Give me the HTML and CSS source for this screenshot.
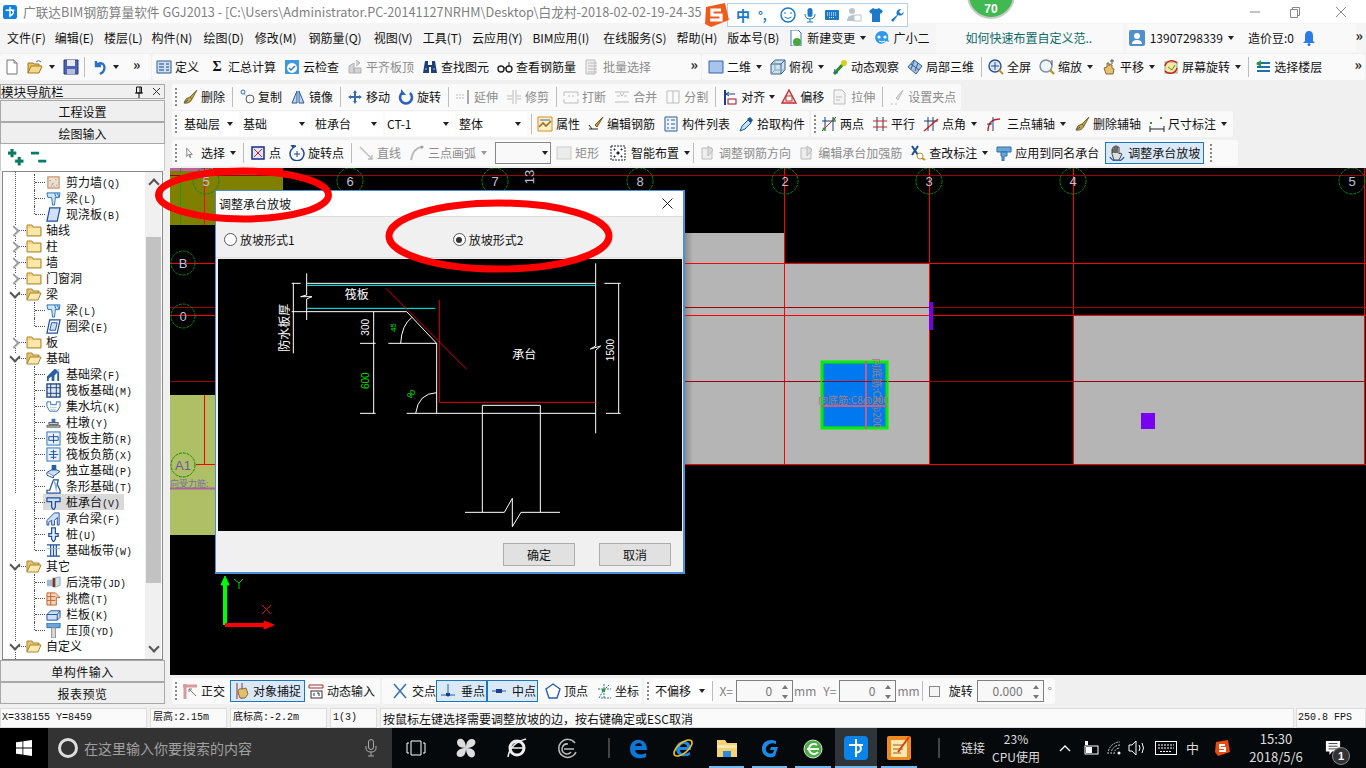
FILE: index.html
```html
<!DOCTYPE html>
<html lang="zh-CN">
<head>
<meta charset="utf-8">
<title>广联达BIM钢筋算量软件 GGJ2013</title>
<link rel="stylesheet" href="styles.css">
</head>
<body>
<svg class="sprite" width="0" height="0">
<defs>
<symbol id="doc" viewBox="0 0 16 16"><path d="M3 1h7l3 3v11H3z" fill="#fff" stroke="#777"/><path d="M10 1v3h3" fill="#ddd" stroke="#777"/></symbol>
<symbol id="open" viewBox="0 0 16 16"><path d="M1 14V4h5l1 1h5v2" fill="#e8c468" stroke="#a07820"/><path d="M1 14l3-7h11l-3 7z" fill="#f5d98a" stroke="#a07820"/><path d="M9 3q3-3 5 0" fill="none" stroke="#3a6db0"/></symbol>
<symbol id="save" viewBox="0 0 16 16"><path d="M1 1h14v14H1z" fill="#4c62b5" stroke="#2a3a80"/><path d="M4 1h8v6H4z" fill="#e8e8f0"/><path d="M4 10h8v5H4z" fill="#b8c0d8"/></symbol>
<symbol id="undo" viewBox="0 0 16 16"><path d="M4 2v5h5M4 7q3-4 7-2 3 3 0 8l-3 2" fill="none" stroke="#2b6fc4" stroke-width="2.4"/></symbol>
<symbol id="def" viewBox="0 0 16 16"><path d="M1 2h14v12H1z" fill="#cfe0f4" stroke="#2a5a9a"/><path d="M3 5h5M3 8h5M3 11h5M10 5h3M10 8h3M10 11h3" stroke="#1c3f78"/></symbol>
<symbol id="cloud" viewBox="0 0 16 16"><path d="M1 1h14v14H1z" fill="#3c9ae0" rx="2"/><circle cx="8" cy="9" r="5" fill="#fff"/><path d="M5 9l2 2 4-4" fill="none" stroke="#2a7fc8" stroke-width="1.5"/></symbol>
<symbol id="flat" viewBox="0 0 16 16"><path d="M2 14V7l5-3v10zM7 14h7v-5H7zM9 1l4 3-4 3" fill="#d4d4d4" stroke="#b0b0b0"/></symbol>
<symbol id="binoc" viewBox="0 0 16 16"><path d="M3 2h3v4h4V2h3l2 12H9V8H7v6H1z" fill="#1f3f7a"/><path d="M3 10h2M11 10h2" stroke="#9cc" /></symbol>
<symbol id="glass" viewBox="0 0 16 16"><circle cx="4" cy="10" r="3" fill="none" stroke="#222" stroke-width="1.4"/><circle cx="12" cy="10" r="3" fill="none" stroke="#222" stroke-width="1.4"/><path d="M7 9h2M12 7V3" stroke="#222"/></symbol>
<symbol id="batch" viewBox="0 0 16 16"><path d="M2 1h9v14H2z" fill="#eee" stroke="#bbb"/><path d="M4 4h9M4 7h9M4 10h9M4 13h9" stroke="#bbb"/></symbol>
<symbol id="r2d" viewBox="0 0 16 16"><path d="M1 2h14v12H1z" fill="#a9c4ec" stroke="#3560a8"/></symbol>
<symbol id="cube" viewBox="0 0 16 16"><path d="M1 5l4-4h10v10l-4 4H1z" fill="#cfe0f0" stroke="#35608c"/><path d="M1 5h10v10M11 5l4-4" fill="none" stroke="#35608c"/><path d="M5 1v10L1 15M5 11h10" fill="none" stroke="#8aa"/></symbol>
<symbol id="orbit" viewBox="0 0 16 16"><path d="M2 15L12 4" stroke="#2c8a2c" stroke-width="3"/><circle cx="12" cy="4" r="3" fill="#d8d020"/><path d="M3 10q-2 4 3 4" fill="none" stroke="#1a5ea8"/></symbol>
<symbol id="c3d" viewBox="0 0 16 16"><path d="M1 8l6-7 8 6-6 8z" fill="#a8c4e4" stroke="#355f90"/><path d="M4 5l8 6M7 2l-3 8M11 4l-3 8" stroke="#355f90"/></symbol>
<symbol id="zall" viewBox="0 0 16 16"><circle cx="7" cy="7" r="6" fill="#dbe8f8" stroke="#2a4f90" stroke-width="1.4"/><path d="M7 3v8M3 7h8" stroke="#2a4f90"/><path d="M11 11l4 4" stroke="#c09020" stroke-width="2"/></symbol>
<symbol id="zoom" viewBox="0 0 16 16"><circle cx="7" cy="7" r="6" fill="#eef4fb" stroke="#7a8a9a" stroke-width="1.4"/><path d="M11 11l4 4" stroke="#c09020" stroke-width="2.4"/><path d="M13 1v5" stroke="#555"/></symbol>
<symbol id="pan" viewBox="0 0 16 16"><path d="M3 9l3-1V4h2v3l1-2 2 1v3l2 1-1 5H5z" fill="#e4c070" stroke="#8a6a30"/><path d="M11 0v5M9 2h4" stroke="#456"/></symbol>
<symbol id="scr" viewBox="0 0 16 16"><rect x="2" y="3" width="12" height="11" fill="#f5e9a0" stroke="#8aa"/><path d="M2 7a7 7 0 0 1 12-3M14 9a7 7 0 0 1-12 3" fill="none" stroke="#d02020" stroke-width="1.5"/><path d="M5 8l4 3 3-5" stroke="#3a9a3a" fill="none"/></symbol>
<symbol id="floor" viewBox="0 0 16 16"><path d="M2 4h13M2 8h13M2 12h13" stroke="#1f6fa8" stroke-width="2"/><path d="M6 1L1 5l5 3" fill="#2e9a3a"/></symbol>
<symbol id="del" viewBox="0 0 16 16"><path d="M15 1L8 8l2 2zM2 14q1-5 6-6l2 2q-2 5-8 4z" fill="#c0a040" stroke="#7a6a30"/><path d="M2 14l4-3" stroke="#2a5fa0"/></symbol>
<symbol id="copy" viewBox="0 0 16 16"><circle cx="4" cy="3" r="2" fill="none" stroke="#2a6fb0"/><circle cx="11" cy="10" r="4" fill="none" stroke="#555"/><path d="M5 5l4 3" stroke="#999" stroke-dasharray="2 1"/></symbol>
<symbol id="mirror" viewBox="0 0 16 16"><path d="M7 2L2 14h5zM9 2l5 12H9z" fill="#bcd4ee" stroke="#2a5a9a"/></symbol>
<symbol id="move" viewBox="0 0 16 16"><path d="M8 1l2 3H9v3h3V6l3 2-3 2V9H9v3h1l-2 3-2-3h1V9H4v1L1 8l3-2v1h3V4H6z" fill="#3a6aa8"/></symbol>
<symbol id="rot" viewBox="0 0 16 16"><path d="M4 4a6 6 0 1 0 8 0" fill="none" stroke="#2a60c0" stroke-width="2.6"/><path d="M3 0v6h5z" fill="#2a60c0"/></symbol>
<symbol id="ext" viewBox="0 0 16 16"><path d="M1 6h9M1 9h9" stroke="#bbb" stroke-dasharray="2 1"/><path d="M13 1v14" stroke="#aaa" stroke-width="2"/></symbol>
<symbol id="trim" viewBox="0 0 16 16"><path d="M7 1v14M10 1v14M1 7h5M11 7h4M1 10h5M11 10h4" stroke="#bbb"/></symbol>
<symbol id="brk" viewBox="0 0 16 16"><path d="M1 7V3h14v4M1 10v4h14v-4M5 7h2M9 7h2" fill="none" stroke="#bbb"/></symbol>
<symbol id="mrg" viewBox="0 0 16 16"><path d="M1 3h14M1 13h14M3 7h3M10 7h3M6 4l2 3 2-3" fill="none" stroke="#bbb"/></symbol>
<symbol id="spl" viewBox="0 0 16 16"><path d="M2 2h12v12H2zM8 2v12" fill="none" stroke="#bbb"/></symbol>
<symbol id="align" viewBox="0 0 16 16"><path d="M3 1v15" stroke="#1a3e90" stroke-width="2"/><path d="M4 5h9M4 5l3-2M4 5l3 2" stroke="#1a3e90" fill="none"/><rect x="6" y="10" width="8" height="5" fill="#fff" stroke="#a01020"/></symbol>
<symbol id="offs" viewBox="0 0 16 16"><path d="M8 1l7 13H1z" fill="#fbe0dc" stroke="#c03030" stroke-width="1.4"/><rect x="5" y="7" width="6" height="5" fill="#fff" stroke="#c03030"/></symbol>
<symbol id="strt" viewBox="0 0 16 16"><path d="M2 1h8l3 3v11H2z" fill="#f4f4f4" stroke="#bbb"/><path d="M4 8h6M4 11h4" stroke="#bbb"/></symbol>
<symbol id="grp" viewBox="0 0 16 16"><path d="M14 1L7 9l2 2zM2 15h2M6 15h2" stroke="#bbb" fill="#ddd"/></symbol>
<symbol id="attr" viewBox="0 0 16 16"><path d="M1 1h14v14H1z" fill="#fff1c8" stroke="#e08a20"/><path d="M2 11l4-4 3 3 5-5" fill="none" stroke="#a06a20" stroke-width="1.6"/><path d="M3 4h10" stroke="#2a6fb0"/></symbol>
<symbol id="edrb" viewBox="0 0 16 16"><path d="M15 1L7 9l2 2z" fill="#c9a030" stroke="#7a5020"/><path d="M1 13h9M1 9l3 4" stroke="#222" fill="none"/></symbol>
<symbol id="list" viewBox="0 0 16 16"><path d="M2 1h12v14H2z" fill="#eef4fb" stroke="#2a5a9a"/><path d="M4 4h2M4 8h2M4 12h2M8 4h4M8 8h4M8 12h4" stroke="#2a5a9a"/></symbol>
<symbol id="pick" viewBox="0 0 16 16"><path d="M2 15l2-5 6-6 3 3-6 6z" fill="#bfe0f4" stroke="#1c5a9a"/><path d="M9 3l4 4 2-3-3-3z" fill="#1c5a9a"/></symbol>
<symbol id="two" viewBox="0 0 16 16"><path d="M4 1v14M12 1v14M1 5h14" stroke="#1a3e78"/><path d="M1 15L15 1" stroke="#d02020"/><circle cx="3" cy="13" r="1.5" fill="#2a9a2a"/><circle cx="13" cy="3" r="1.5" fill="#2a9a2a"/></symbol>
<symbol id="par" viewBox="0 0 16 16"><path d="M5 1v14M11 1v14" stroke="#1a3e78"/><path d="M1 5h14M1 11h14" stroke="#d02020"/></symbol>
<symbol id="ang" viewBox="0 0 16 16"><path d="M5 1v14M10 1v14M1 5h14" stroke="#1a3e78"/><path d="M1 15L15 3" stroke="#d02020" stroke-width="1.4"/></symbol>
<symbol id="arc3" viewBox="0 0 16 16"><path d="M2 15Q2 3 14 3" fill="none" stroke="#d02020" stroke-width="1.4"/><path d="M7 1v14M1 8h5" stroke="#1a3e78"/></symbol>
<symbol id="dim" viewBox="0 0 16 16"><path d="M1 13h14M1 10v6M15 10v6" stroke="#222"/><rect x="1" y="6" width="2" height="2" fill="#2a9a2a"/><rect x="11" y="1" width="2" height="2" fill="#2a9a2a"/></symbol>
<symbol id="cur" viewBox="0 0 16 16"><path d="M4 1v12l3-3 2 5 1-1-2-4h4z" fill="#fff" stroke="#555"/></symbol>
<symbol id="pnt" viewBox="0 0 16 16"><rect x="2" y="2" width="12" height="12" fill="#dfe6f8" stroke="#1a2a90" stroke-width="1.5"/><path d="M4 4l8 8M12 4l-8 8" stroke="#d02020"/></symbol>
<symbol id="rtp" viewBox="0 0 16 16"><path d="M4 3a7 7 0 1 0 8 0" fill="none" stroke="#1a4a90" stroke-width="1.5"/><path d="M2 0l2 3 3-2zM8 6v6M5 9h6" fill="#1a4a90" stroke="#1a4a90"/></symbol>
<symbol id="ln" viewBox="0 0 16 16"><path d="M2 2l12 12M10 14h4v-4" fill="none" stroke="#bbb" stroke-width="1.3"/></symbol>
<symbol id="arc" viewBox="0 0 16 16"><path d="M2 15Q4 3 13 2" fill="none" stroke="#bbb" stroke-width="2"/><circle cx="13" cy="2" r="1.5" fill="#999"/></symbol>
<symbol id="rg" viewBox="0 0 16 16"><rect x="1" y="2" width="14" height="12" fill="#ececec" stroke="#ccc"/></symbol>
<symbol id="smart" viewBox="0 0 16 16"><path d="M1 1h14v14H1z" fill="#fff" stroke="#222" stroke-dasharray="2 1"/><path d="M4 4h1v1H4zM11 4h1v1h-1zM4 11h1v1H4zM11 11h1v1h-1zM7 7h2v2H7z" stroke="#234"/></symbol>
<symbol id="adj" viewBox="0 0 16 16"><path d="M2 3h10v11H2z" fill="#eee" stroke="#bbb"/><path d="M8 1l5 4-5 6z" fill="#ddd" stroke="#bbb"/></symbol>
<symbol id="chk" viewBox="0 0 16 16"><path d="M2 1l4 6 2 3M8 1L2 10" stroke="#1a4a90" stroke-width="2" fill="none"/><circle cx="10" cy="11" r="3" fill="#fff" stroke="#c09020"/><path d="M12 13l3 2" stroke="#c09020" stroke-width="2"/></symbol>
<symbol id="apl" viewBox="0 0 16 16"><path d="M1 2h14v5H1z" fill="#6aa6dc" stroke="#2a6ea8"/><path d="M5 7h6v4H8v5H6v-5H5z" fill="#6aa6dc" stroke="#2a6ea8"/></symbol>
<symbol id="hand" viewBox="0 0 16 16"><path d="M3 9V4h1v4-6h2v6-7h2v7-6h2v7l1-1 2 1-3 6H5z" fill="#ddd" stroke="#444"/><path d="M1 12q2 4 7 4t7-4" fill="none" stroke="#1a5ea8" stroke-width="1.4"/></symbol>
<symbol id="ort" viewBox="0 0 16 16"><path d="M3 1v15M1 3h14" stroke="#d99a9a" stroke-width="3"/><path d="M7 6l7 7M7 6v3M7 6h3" stroke="#777" fill="none"/></symbol>
<symbol id="snp" viewBox="0 0 16 16"><path d="M3 0v16M8 0v16" stroke="#8a3030"/><path d="M4 9q0-4 4-3l4-1 2 6-3 4H6z" fill="#e0c070" stroke="#8a6a30"/></symbol>
<symbol id="dyn" viewBox="0 0 16 16"><path d="M1 2h14M1 5h14M1 2v3M15 2v3" stroke="#a03030" fill="none"/><rect x="3" y="8" width="11" height="7" fill="#fff" stroke="#333"/><path d="M6 10v3M9 10h2v3" stroke="#333" fill="none"/></symbol>
<symbol id="crs" viewBox="0 0 16 16"><path d="M2 1l12 14M14 1L2 15" stroke="#2a6fb0" stroke-width="1.4"/></symbol>
<symbol id="perp" viewBox="0 0 16 16"><path d="M8 1v13M1 12h14" stroke="#1a5ea8"/><rect x="6" y="10" width="4" height="3" fill="#1a3e90"/></symbol>
<symbol id="midp" viewBox="0 0 16 16"><path d="M1 8h14" stroke="#1a5ea8"/><rect x="5" y="6" width="6" height="4" fill="#1a3e90"/></symbol>
<symbol id="vert" viewBox="0 0 16 16"><path d="M8 1l7 5-3 9H4L1 6z" fill="#fff" stroke="#2a5fb0" stroke-width="1.4"/></symbol>
<symbol id="crd" viewBox="0 0 16 16"><path d="M3 15L7 8 13 2M5 15h10M8 1v14M2 6h13" stroke="#2a6fb0" stroke-dasharray="2 1" fill="none"/><rect x="6" y="6" width="3" height="3" fill="#2a9a2a"/></symbol>
<symbol id="nwc" viewBox="0 0 16 16"><path d="M3 0h7l3 3v13H3z" fill="#fff" stroke="#3a7ab8"/><circle cx="9" cy="12" r="4" fill="#4aa83a"/></symbol>
<symbol id="gxe" viewBox="0 0 16 16"><path d="M8 1c5 0 7 4 6 8l1 3-3-1c-2 3-6 4-9 1C-1 8 2 1 8 1z" fill="#2e9be8"/><circle cx="5" cy="7" r="1.6" fill="#fff"/><circle cx="11" cy="7" r="1.6" fill="#fff"/><path d="M5 11q3 2 6 0" stroke="#fff" fill="none"/></symbol>
<symbol id="usr" viewBox="0 0 16 16"><rect width="16" height="16" rx="2" fill="#4f8fd0"/><circle cx="8" cy="6" r="3" fill="#fff"/><path d="M3 14q0-4 5-4t5 4z" fill="#fff"/></symbol>
<symbol id="bell" viewBox="0 0 16 16"><path d="M8 1q4 0 4 5v5l2 2H2l2-2V6q0-5 4-5z" fill="#2a7ae8"/><circle cx="8" cy="14.5" r="1.5" fill="#2a7ae8"/></symbol>
<symbol id="plus" viewBox="0 0 20 20"><path d="M3 0h3v3h3v3H6v3H3V6H0V3h3zM11 9h3v3h3v3h-3v3h-3v-3H8v-3h3z" fill="#0b7a6c" stroke="#083" stroke-width=".4"/></symbol>
<symbol id="minus" viewBox="0 0 20 20"><path d="M0 3h9v3H0zM8 12h9v3H8z" fill="#0b7a6c"/></symbol>
<symbol id="fold" viewBox="0 0 16 16"><path d="M1 14V3h5l1 2h8v9z" fill="#f6d274" stroke="#a8853a"/><path d="M2 6h12v7H2z" fill="#fbe7a8"/></symbol>
<symbol id="foldo" viewBox="0 0 16 16"><path d="M1 14V3h5l1 2h6v2" fill="#e8c468" stroke="#a8853a"/><path d="M1 14l3-7h11l-3 7z" fill="#fde9ac" stroke="#a8853a"/></symbol>
<symbol id="t-wall" viewBox="0 0 16 16"><rect x="2" y="2" width="12" height="12" fill="#eadfd2" stroke="#c07a3a"/><path d="M4 6h1M7 9h1M10 5h1M5 12h1M11 11h1M8 12h1M6 10h1" stroke="#777"/></symbol>
<symbol id="t-beam" viewBox="0 0 16 16"><path d="M1 2h14l-1 5H10l-1 8H7L6 7H2z" fill="#cfe4f6" stroke="#2a70b8"/><path d="M9 2l2 5M12 2l2 5" stroke="#2a70b8"/></symbol>
<symbol id="t-slab" viewBox="0 0 16 16"><path d="M4 1h11l-3 14H1z" fill="#cfe0f8" stroke="#1c4fa0" stroke-width="1.3"/></symbol>
<symbol id="t-ring" viewBox="0 0 16 16"><path d="M4 1h11l-3 14H1z" fill="#fff" stroke="#1c4fa0" stroke-width="1.3"/><path d="M6 4h6l-2 8H4z" fill="#cfe0f8" stroke="#1c4fa0"/></symbol>
<symbol id="t-fb" viewBox="0 0 16 16"><path d="M1 15V10l8-8h5v13h-2V6l-3 3v6H6v-5l-3 2v3z" fill="#2a5fa0"/><path d="M10 2l4 0v4" fill="#bcd4ee"/></symbol>
<symbol id="t-raft" viewBox="0 0 16 16"><rect x="1" y="1" width="14" height="14" fill="#dbe8f8" stroke="#1c4078" stroke-width="1.4"/><path d="M5 1v14M11 1v14M1 5h14M1 11h14" stroke="#1c4078"/></symbol>
<symbol id="t-pit" viewBox="0 0 16 16"><path d="M1 3h4v3h6V3h4v5l-3 5H4L1 8z" fill="#fff" stroke="#2a70b8"/><path d="M4 9h8M5 11h6" stroke="#6aa" stroke-dasharray="1 1"/></symbol>
<symbol id="t-dun" viewBox="0 0 16 16"><path d="M6 4h4v4H6z" fill="#3a6fb0"/><path d="M3 8h10v2H3z" fill="#cfe0f0" stroke="#555"/><path d="M1 11h14v2H1z" fill="#bbb" stroke="#666"/></symbol>
<symbol id="t-rm" viewBox="0 0 16 16"><rect x="1" y="1" width="14" height="14" fill="#e8f0fb" stroke="#2a70b8"/><path d="M8 3v10M3 6h10v4H3z" fill="none" stroke="#1c4fa0"/></symbol>
<symbol id="t-rn" viewBox="0 0 16 16"><rect x="1" y="1" width="14" height="14" fill="#e8f0fb" stroke="#2a70b8"/><path d="M3 8h10M5 5h6M5 11h6M8 3v10" stroke="#1c4fa0"/></symbol>
<symbol id="t-iso" viewBox="0 0 16 16"><path d="M1 10l7-4 7 3-7 5z" fill="#cfe0f4" stroke="#1c4fa0"/><path d="M6 2h5v6H6z" fill="#2a5fa0"/><path d="M1 10v3l7 3v-2" fill="#fff" stroke="#1c4fa0"/></symbol>
<symbol id="t-strp" viewBox="0 0 16 16"><path d="M1 15v-3h3l2-6 2-5h5l-1 5 3 6v3z" fill="#fff" stroke="#1c4fa0" stroke-width="1.3"/><path d="M8 1l4 5-1 9" fill="#8ab0dc"/></symbol>
<symbol id="t-cap" viewBox="0 0 16 16"><path d="M1 3h14v4H10v6l-2 3-2-3V7H1z" fill="#cfe0f4" stroke="#1c4fa0" stroke-width="1.3"/></symbol>
<symbol id="t-cb" viewBox="0 0 16 16"><path d="M1 15V10l8-8h5v13H12V7L9 10v5H6v-5l-3 2v3z" fill="#cfe0f4" stroke="#1c4fa0"/></symbol>
<symbol id="t-pile" viewBox="0 0 16 16"><path d="M6 1h4v6h3v3h-3v3l-2 3-2-3v-3H3V7h3z" fill="#e8f0fb" stroke="#1c4fa0" stroke-width="1.3"/></symbol>
<symbol id="t-band" viewBox="0 0 16 16"><path d="M1 2h14M1 14h14M5 2v12M8 2v12M11 2v12" stroke="#1c4fa0" stroke-width="1.3"/><path d="M1 6h14" stroke="#8ab0dc"/></symbol>
<symbol id="t-post" viewBox="0 0 16 16"><path d="M1 5h6v7H1z" fill="#a0b8d0"/><path d="M7 3h3v10H7z" fill="#7a3010"/><path d="M10 3l5-1v9l-5 2z" fill="#cfe0f4" stroke="#8aa"/></symbol>
<symbol id="t-eav" viewBox="0 0 16 16"><path d="M1 2h9l5 5h-4v8H1z" fill="#f4d4bc" stroke="#c0602a"/><path d="M1 6h9M1 10h9M5 2v13" stroke="#c0602a"/></symbol>
<symbol id="t-rail" viewBox="0 0 16 16"><path d="M1 8l4-4h10v7l-3 3H1z" fill="#cfe0f4" stroke="#1c4fa0"/><path d="M1 8h11v6M12 8l3-4" fill="none" stroke="#1c4fa0"/></symbol>
<symbol id="t-cop" viewBox="0 0 16 16"><path d="M1 0h14v5H1z" fill="#6aa6dc" stroke="#2a6ea8"/><path d="M6 5h4v11H6z" fill="#dcdcdc" stroke="#888"/></symbol>
</defs>
</svg>

<header class="titlebar">
  <svg class="appicon" viewBox="0 0 16 16"><rect width="16" height="16" rx="3" fill="#1282e0"/><path d="M8 2v12M3 6h4a3 3 0 1 1 0 5M13 6H9" fill="none" stroke="#fff" stroke-width="1.6"/></svg>
  <span class="titletext">广联达BIM钢筋算量软件 GGJ2013 - [C:\Users\Administrator.PC-20141127NRHM\Desktop\白龙村-2018-02-02-19-24-35</span>
  <div class="winctl">
    <svg class="wc" viewBox="0 0 12 12"><path d="M1 6h10" stroke="#888"/></svg>
    <svg class="wc" viewBox="0 0 12 12"><path d="M1.5 3.5h7v8h-7zM3.5 3.5v-2h7v8h-2" fill="none" stroke="#888"/></svg>
    <svg class="wc" viewBox="0 0 12 12"><path d="M1 1l10 10M11 1L1 11" stroke="#888"/></svg>
  </div>
</header>

<nav class="menubar">
  <span class="m mn">文件(F)</span><span class="m">编辑(E)</span><span class="m mn">楼层(L)</span><span class="m mw">构件(N)</span><span class="m mw">绘图(D)</span><span class="m mx">修改(M)</span><span class="m mx">钢筋量(Q)</span><span class="m">视图(V)</span><span class="m">工具(T)</span><span class="m">云应用(Y)</span><span class="m mz">BIM应用(I)</span><span class="m">在线服务(S)</span><span class="m">帮助(H)</span><span class="m mn">版本号(B)</span>
  <span class="t"><svg class="i"><use href="#nwc"/></svg>新建变更</span><i class="ar"></i>
  <span class="t"><svg class="i"><use href="#gxe"/></svg>广小二</span>
  <span class="newsbox">如何快速布置自定义范..</span>
  <div class="userbox">
    <span class="t"><svg class="i"><use href="#usr"/></svg>13907298339</span><i class="ar"></i>
    <span class="m bean">造价豆:0</span>
    <svg class="i"><use href="#bell"/></svg>
  </div>
  <span class="more push">»</span>
</nav>

<div class="tb1">
  <div class="grp g-a">
    <svg class="i"><use href="#doc"/></svg>
    <svg class="i op"><use href="#open"/></svg><i class="ar ar1"></i>
    <svg class="i"><use href="#save"/></svg><i class="sep s5"></i>
    <svg class="i"><use href="#undo"/></svg><i class="ar ar2"></i>
    <span class="more">»</span>
  </div>
  <div class="grp g-b">
    <span class="t"><svg class="i"><use href="#def"/></svg>定义</span>
    <span class="t sig"><b class="sigma">Σ</b>汇总计算</span>
    <span class="t"><svg class="i"><use href="#cloud"/></svg>云检查</span>
    <span class="t off"><svg class="i"><use href="#flat"/></svg>平齐板顶</span>
    <span class="t"><svg class="i"><use href="#binoc"/></svg>查找图元</span>
    <span class="t"><svg class="i"><use href="#glass"/></svg>查看钢筋量</span>
    <span class="t off"><svg class="i"><use href="#batch"/></svg>批量选择</span>
    <span class="more push">»</span>
  </div>
  <div class="grp g-c">
    <span class="t sel2d"><svg class="i"><use href="#r2d"/></svg>二维</span><i class="ar"></i>
    <span class="t"><svg class="i"><use href="#cube"/></svg>俯视</span><i class="ar"></i>
    <span class="t"><svg class="i"><use href="#orbit"/></svg>动态观察</span>
    <span class="t"><svg class="i"><use href="#c3d"/></svg>局部三维</span><i class="sep"></i>
    <span class="t"><svg class="i"><use href="#zall"/></svg>全屏</span>
    <span class="t"><svg class="i"><use href="#zoom"/></svg>缩放</span><i class="ar"></i>
    <span class="t"><svg class="i"><use href="#pan"/></svg>平移</span><i class="ar"></i>
    <span class="t"><svg class="i"><use href="#scr"/></svg>屏幕旋转</span><i class="ar"></i><i class="sep"></i>
    <span class="t"><svg class="i"><use href="#floor"/></svg>选择楼层</span>
    <span class="more push">»</span>
  </div>
</div>

<div class="work">
  <aside class="side">
    <div class="navh"><span>模块导航栏</span>
      <svg class="pin" viewBox="0 0 10 12"><path d="M2.500 1h5v6h-5zM1 7h8M5 7v5M6 1v6" fill="none" stroke="#111"/></svg>
      <svg class="navx" viewBox="0 0 9 9"><path d="M1 1l7 7M8 1L1 8" stroke="#333"/></svg>
    </div>
    <div class="sbtn">工程设置</div>
    <div class="sbtn">绘图输入</div>
    <div class="sico"><svg class="pm"><use href="#plus"/></svg><svg class="pm"><use href="#minus"/></svg></div>
    <div class="treebox">
      <div class="tree">
        <div class="r l"><svg class="ti"><use href="#t-wall"/></svg><span>剪力墙<em>(Q)</em></span></div>
        <div class="r l"><svg class="ti"><use href="#t-beam"/></svg><span>梁<em>(L)</em></span></div>
        <div class="r l end"><svg class="ti"><use href="#t-slab"/></svg><span>现浇板<em>(B)</em></span></div>
        <div class="r f"><i class="cr"></i><svg class="fi"><use href="#fold"/></svg><span>轴线</span></div>
        <div class="r f"><i class="cr"></i><svg class="fi"><use href="#fold"/></svg><span>柱</span></div>
        <div class="r f"><i class="cr"></i><svg class="fi"><use href="#fold"/></svg><span>墙</span></div>
        <div class="r f"><i class="cr"></i><svg class="fi"><use href="#fold"/></svg><span>门窗洞</span></div>
        <div class="r f"><i class="cr dn"></i><svg class="fi"><use href="#foldo"/></svg><span>梁</span></div>
        <div class="r l"><svg class="ti"><use href="#t-beam"/></svg><span>梁<em>(L)</em></span></div>
        <div class="r l end"><svg class="ti"><use href="#t-ring"/></svg><span>圈梁<em>(E)</em></span></div>
        <div class="r f"><i class="cr"></i><svg class="fi"><use href="#fold"/></svg><span>板</span></div>
        <div class="r f"><i class="cr dn"></i><svg class="fi"><use href="#foldo"/></svg><span>基础</span></div>
        <div class="r l"><svg class="ti"><use href="#t-fb"/></svg><span>基础梁<em>(F)</em></span></div>
        <div class="r l"><svg class="ti"><use href="#t-raft"/></svg><span>筏板基础<em>(M)</em></span></div>
        <div class="r l"><svg class="ti"><use href="#t-pit"/></svg><span>集水坑<em>(K)</em></span></div>
        <div class="r l"><svg class="ti"><use href="#t-dun"/></svg><span>柱墩<em>(Y)</em></span></div>
        <div class="r l"><svg class="ti"><use href="#t-rm"/></svg><span>筏板主筋<em>(R)</em></span></div>
        <div class="r l"><svg class="ti"><use href="#t-rn"/></svg><span>筏板负筋<em>(X)</em></span></div>
        <div class="r l"><svg class="ti"><use href="#t-iso"/></svg><span>独立基础<em>(P)</em></span></div>
        <div class="r l"><svg class="ti"><use href="#t-strp"/></svg><span>条形基础<em>(T)</em></span></div>
        <div class="r l cur"><svg class="ti"><use href="#t-cap"/></svg><span>桩承台<em>(V)</em></span></div>
        <div class="r l"><svg class="ti"><use href="#t-cb"/></svg><span>承台梁<em>(F)</em></span></div>
        <div class="r l"><svg class="ti"><use href="#t-pile"/></svg><span>桩<em>(U)</em></span></div>
        <div class="r l end"><svg class="ti"><use href="#t-band"/></svg><span>基础板带<em>(W)</em></span></div>
        <div class="r f"><i class="cr dn"></i><svg class="fi"><use href="#foldo"/></svg><span>其它</span></div>
        <div class="r l"><svg class="ti"><use href="#t-post"/></svg><span>后浇带<em>(JD)</em></span></div>
        <div class="r l"><svg class="ti"><use href="#t-eav"/></svg><span>挑檐<em>(T)</em></span></div>
        <div class="r l"><svg class="ti"><use href="#t-rail"/></svg><span>栏板<em>(K)</em></span></div>
        <div class="r l end"><svg class="ti"><use href="#t-cop"/></svg><span>压顶<em>(YD)</em></span></div>
        <div class="r f"><i class="cr dn"></i><svg class="fi"><use href="#foldo"/></svg><span>自定义</span></div>
      </div>
      <div class="vs"><i class="vup"></i><div class="vthumb"></div><i class="vdn"></i></div>
    </div>
    <div class="sbtn s2">单构件输入</div>
    <div class="sbtn s2">报表预览</div>
  </aside>

  <main class="right">
    <div class="tbr r2">
      <div class="grp g-d">
        <i class="grip"></i>
        <span class="t"><svg class="i"><use href="#del"/></svg>删除</span><i class="sep"></i>
        <span class="t"><svg class="i"><use href="#copy"/></svg>复制</span>
        <span class="t"><svg class="i"><use href="#mirror"/></svg>镜像</span><i class="sep"></i>
        <span class="t"><svg class="i"><use href="#move"/></svg>移动</span>
        <span class="t"><svg class="i"><use href="#rot"/></svg>旋转</span><i class="sep"></i>
        <span class="t off"><svg class="i"><use href="#ext"/></svg>延伸</span>
        <span class="t off"><svg class="i"><use href="#trim"/></svg>修剪</span><i class="sep"></i>
        <span class="t off"><svg class="i"><use href="#brk"/></svg>打断</span>
        <span class="t off"><svg class="i"><use href="#mrg"/></svg>合并</span>
        <span class="t off"><svg class="i"><use href="#spl"/></svg>分割</span><i class="sep"></i>
        <span class="t tight"><svg class="i"><use href="#align"/></svg>对齐</span><i class="ar a2"></i>
        <span class="t"><svg class="i"><use href="#offs"/></svg>偏移</span>
        <span class="t off"><svg class="i"><use href="#strt"/></svg>拉伸</span><i class="sep"></i>
        <span class="t off"><svg class="i"><use href="#grp"/></svg>设置夹点</span>
      </div>
    </div>
    <div class="tbr r3">
      <div class="grp g-e">
        <i class="grip"></i>
        <span class="cb w57">基础层<i class="ar"></i></span>
        <span class="cb w70">基础<i class="ar"></i></span>
        <span class="cb w70">桩承台<i class="ar"></i></span>
        <span class="cb w70">CT-1<i class="ar"></i></span>
        <span class="cb w70">整体<i class="ar"></i></span>
        <i class="sep s4"></i>
        <span class="t"><svg class="i"><use href="#attr"/></svg>属性</span>
        <span class="t"><svg class="i"><use href="#edrb"/></svg>编辑钢筋</span>
        <span class="t"><svg class="i"><use href="#list"/></svg>构件列表</span>
        <span class="t"><svg class="i"><use href="#pick"/></svg>拾取构件</span>
      </div>
      <div class="grp g-f">
        <i class="grip"></i>
        <span class="t"><svg class="i"><use href="#two"/></svg>两点</span>
        <span class="t"><svg class="i"><use href="#par"/></svg>平行</span>
        <span class="t"><svg class="i"><use href="#ang"/></svg>点角</span><i class="ar"></i>
        <span class="t ga"><svg class="i"><use href="#arc3"/></svg>三点辅轴</span><i class="ar"></i>
        <span class="t"><svg class="i"><use href="#del"/></svg>删除辅轴</span>
        <span class="t"><svg class="i"><use href="#dim"/></svg>尺寸标注</span><i class="ar"></i>
      </div>
    </div>
    <div class="tbr r4">
      <div class="grp g-g">
        <i class="grip"></i>
        <span class="t wide"><svg class="i"><use href="#cur"/></svg>选择</span><i class="ar"></i><i class="sep"></i>
        <span class="t"><svg class="i"><use href="#pnt"/></svg>点</span>
        <span class="t"><svg class="i"><use href="#rtp"/></svg>旋转点</span><i class="sep"></i>
        <span class="t off"><svg class="i"><use href="#ln"/></svg>直线</span>
        <span class="t off"><svg class="i"><use href="#arc"/></svg>三点画弧</span><i class="ar off"></i>
        <span class="combo"><i class="ar"></i></span>
        <span class="t off"><svg class="i"><use href="#rg"/></svg>矩形</span>
        <span class="t sm"><svg class="i"><use href="#smart"/></svg>智能布置</span><i class="ar a4"></i><i class="sep"></i>
        <span class="t off"><svg class="i"><use href="#adj"/></svg>调整钢筋方向</span>
        <span class="t off"><svg class="i"><use href="#adj"/></svg>编辑承台加强筋</span>
        <span class="t"><svg class="i"><use href="#chk"/></svg>查改标注</span><i class="ar"></i>
        <span class="t"><svg class="i"><use href="#apl"/></svg>应用到同名承台</span>
        <span class="t act"><svg class="i"><use href="#hand"/></svg>调整承台放坡</span>
        <i class="grip g2"></i>
      </div>
    </div>

    <svg class="canvas" viewBox="170 168 1196 507" width="1196" height="507">
      <defs><linearGradient id="sh" x1="0" x2="1" y1="0" y2="0"><stop offset="0" stop-color="#8c8c8c"/><stop offset="1" stop-color="#b5b5b5"/></linearGradient></defs>
      <rect x="170" y="168" width="1196" height="507" fill="#000"/>
      <rect x="170" y="168" width="113" height="57" fill="#808000"/>
      <rect x="213" y="168" width="70" height="2" fill="#f00"/>
      <rect x="170" y="168" width="43" height="3" fill="#c060a0"/>
      <rect x="170" y="395" width="46" height="140" fill="#aebf66"/>
      <rect x="685" y="233" width="100" height="31" fill="#b5b5b5"/>
      <rect x="685" y="264" width="244" height="200" fill="#b5b5b5"/>
      <rect x="685" y="233" width="8" height="231" fill="url(#sh)"/>
      <rect x="1074" y="316" width="290" height="148" fill="#b5b5b5"/>
      <g class="crisp" stroke="#f00" fill="none">
        <path d="M784.500 168V464M929.500 168V464M1073.500 168V464M1364.500 168V464M204.500 168V225"/>
        <path d="M170 263.500H215M685 263.500H1366M685 315.500H1366M170 315.500H215M685 464.500H1366M204.500 395V464M196 464.500H215"/>
      </g>
      <g class="crisp" stroke="#a00000" fill="none">
        <path d="M170 175.500H1366M170 307.500H1366M170 381.500H1366"/>
      </g>
      <path class="crisp" d="M180.500 225V168" stroke="#1a9a1a" fill="none"/>
      <g fill="none" stroke="#0a8a0a" stroke-dasharray="3 1">
        <circle cx="206" cy="181" r="13"/><circle cx="350" cy="181" r="13"/><circle cx="495" cy="181" r="13"/><circle cx="640" cy="181" r="13"/><circle cx="785" cy="181" r="13"/><circle cx="929" cy="181" r="13"/><circle cx="1073" cy="181" r="13"/><circle cx="1352" cy="181" r="13"/><circle cx="183" cy="263" r="12"/><circle cx="183" cy="316" r="12"/><circle cx="183" cy="465" r="12"/>
      </g>
      <g class="axn">
        <text x="206" y="186">5</text><text x="350" y="186">6</text><text x="495" y="186">7</text><text x="640" y="186">8</text><text x="785" y="186">2</text><text x="929" y="186">3</text><text x="1073" y="186">4</text><text x="1352" y="186">5</text><text x="183" y="268">B</text><text x="183" y="321">0</text>
        <text x="183" y="470" class="ax1">A1</text>
        <text x="0" y="0" transform="translate(534 177) rotate(-90)">13</text>
      </g>
      <path d="M170 488.500H215" stroke="#b060a0" stroke-width="2"/>
      <text x="170" y="487" class="lab">向受力筋:</text>
      <rect x="929" y="302" width="4" height="28" fill="#7a00e0"/>
      <rect x="1141" y="413" width="14" height="16" fill="#7a00f0"/>
      <rect x="822" y="362" width="65" height="66" fill="#0078f0" stroke="#00f000" stroke-width="3"/>
      <path class="crisp" d="M821 406H887M865.500 361V429" stroke="#c0608c" stroke-width="2"/>
      <path class="crisp" d="M822 381.500H887" stroke="#a00000"/>
      <text x="818" y="404" class="lab2">向底筋:C8@200</text>
      <text transform="translate(873 358) rotate(90)" class="lab2">向底筋:C8@200</text>
      <path d="M225 625V584" stroke="#00ff00" stroke-width="4"/>
      <path d="M225 576l-4 9h8z" fill="#00ff00" stroke="#00ff00"/>
      <path d="M225 625H264" stroke="#f00" stroke-width="4"/>
      <path d="M274 625l-10-4v8z" fill="#f00" stroke="#f00"/>
      <path d="M234 579l5 4 4-4M239 583v6" stroke="#00d000" fill="none"/>
      <path d="M262 605l9 9M271 605l-9 9" stroke="#e00000" fill="none"/>
    </svg>

    <div class="tbr rb">
      <div class="grp g-h">
        <i class="grip"></i>
        <span class="t"><svg class="i"><use href="#ort"/></svg>正交</span>
        <span class="t act"><svg class="i"><use href="#snp"/></svg>对象捕捉</span>
        <span class="t"><svg class="i"><use href="#dyn"/></svg>动态输入</span>
      </div>
      <div class="grp g-i">
        <span class="t cross"><svg class="i"><use href="#crs"/></svg>交点</span>
        <span class="t act a3"><svg class="i"><use href="#perp"/></svg>垂点</span>
        <span class="t act a3"><svg class="i"><use href="#midp"/></svg>中点</span>
        <span class="t"><svg class="i"><use href="#vert"/></svg>顶点</span>
        <span class="t"><svg class="i"><use href="#crd"/></svg>坐标</span>
      </div>
      <div class="grp g-j">
        <i class="grip"></i>
        <span class="offset">不偏移<i class="ar"></i></span><i class="sep"></i>
        <span class="gl">X=</span><span class="spin">0<i class="sp"></i></span><span class="gl">mm</span>
        <span class="gl y">Y=</span><span class="spin">0<i class="sp"></i></span><span class="gl">mm</span><i class="sep"></i>
        <i class="chkb"></i><span class="rotl">旋转</span><span class="spin s3">0.000<i class="sp"></i></span><span class="gl deg">°</span>
      </div>
    </div>
  </main>
</div>

<footer class="status">
  <span class="c c1">X=338155 Y=8459</span>
  <span class="c c2">层高:2.15m</span>
  <span class="c c3">底标高:-2.2m</span>
  <span class="c c4">1(3)</span>
  <span class="c c5">按鼠标左键选择需要调整放坡的边，按右键确定或ESC取消</span>
  <span class="c c6">250.8 FPS</span>
</footer>

<div class="taskbar">
  <div class="start"><svg class="win" viewBox="0 0 16 16"><path d="M0 2.300l6.500-.9v6.200H0zM7.300 1.300L16 0v7.600H7.300zM0 8.400h6.500v6.200L0 13.700zM7.300 8.400H16V16l-8.700-1.200z" fill="#fff"/></svg></div>
  <div class="search"><i class="cortana"></i><span class="stext">在这里输入你要搜索的内容</span>
    <svg class="mic" viewBox="0 0 12 18"><rect x="3.500" y=".5" width="5" height="10" rx="2.500" fill="none" stroke="#aaa"/><path d="M1 7v2q0 4 5 4t5-4V7M6 13v4M3 17h6" fill="none" stroke="#aaa"/></svg>
  </div>
  <div class="tasks">
    <span class="ts w48"><svg class="tv" viewBox="0 0 20 16"><path d="M5 1h10v14H5zM3 3H1v10h2M17 3h2v10h-2" fill="none" stroke="#fff"/></svg></span>
    <span class="ts w52"><svg class="ti2" viewBox="0 0 22 22"><path d="M11 11C4 11 2 8 2 5s3-4 5-3 4 4 4 9zM11 11c0-7 3-9 6-9s4 3 3 5-4 4-9 4zM11 11c7 0 9 3 9 6s-3 4-5 3-4-4-4-9zM11 11c0 7-3 9-6 9s-4-3-3-5 4-4 9-4z" fill="#ddd"/></svg></span>
    <span class="ts w50"><svg class="ti2" viewBox="0 0 22 22"><circle cx="11" cy="11" r="7" fill="none" stroke="#eee" stroke-width="3"/><path d="M5 11h12M2 20q2-14 18-18" fill="none" stroke="#eee" stroke-width="1.600"/></svg></span>
    <span class="ts w52"><svg class="ti2" viewBox="0 0 22 22"><path d="M18 6a9 9 0 1 0 1 9M7 12h10M11 7a5 5 0 1 0 3 8" fill="none" stroke="#bbb" stroke-width="1.500"/></svg></span>
    <i class="tsep"></i>
    <span class="ts w46"><svg class="ti2" viewBox="0 0 22 22"><path d="M3 12c0-7 6-10 10-9 5 1 7 5 7 10H8c0 4 6 6 11 3v4c-7 3-16 1-16-8zM8 9h7c0-4-6-4-7 0z" fill="#0a78d8"/></svg></span>
    <span class="ts w44"><svg class="ti2" viewBox="0 0 22 22"><path d="M4 12c0-6 5-8 8-8 5 0 7 4 7 9H8c0 4 5 5 10 2v3c-6 3-14 1-14-6zM8 10h7c0-4-6-4-7 0z" fill="#1a8ae8"/><ellipse cx="11" cy="11" rx="11" ry="5" transform="rotate(-40 11 11)" fill="none" stroke="#f0c020" stroke-width="1.600"/></svg></span>
    <span class="ts w43 run"><svg class="ti2" viewBox="0 0 22 22"><path d="M1 3h8l2 3h10v14H1z" fill="#f6d274"/><path d="M1 8h20v3H1z" fill="#fbe7a8"/><path d="M7 14h8v6H7z" fill="#2a8ae0"/></svg></span>
    <span class="ts w43 run"><svg class="ti2" viewBox="0 0 22 22"><path d="M17 4C9 1 2 6 3 13s9 9 13 6l3-9h-7l-1 3h4l-1 3c-5 2-8-2-7-5s5-6 10-4z" fill="#1a8ae8"/></svg></span>
    <span class="ts w44 run"><svg class="ti2" viewBox="0 0 22 22"><circle cx="11" cy="12" r="9" fill="#48b040" stroke="#ddd"/><path d="M5 12h12M15 8a5 5 0 1 0 1 7" fill="none" stroke="#fff" stroke-width="2"/></svg></span>
    <span class="ts w42 cur-app run"><svg class="ti2 big" viewBox="0 0 24 24"><rect width="24" height="24" rx="4" fill="#0a84e8"/><path d="M12 3v18M5 9h6a4 4 0 1 1 0 7M19 9h-6" fill="none" stroke="#fff" stroke-width="2"/></svg></span>
    <span class="ts w44 run"><svg class="ti2 big" viewBox="0 0 24 24"><rect width="24" height="24" rx="2" fill="#f08a20"/><rect x="4" y="4" width="16" height="17" fill="#f8e8b0"/><path d="M6 9h10M6 13h10M6 17h8" stroke="#a06020"/><path d="M22 1L11 16" stroke="#d04010" stroke-width="2"/></svg></span>
    <i class="tsep s2"></i>
    <span class="tl link">链接</span>
    <span class="tl cpu"><span>23%</span><span>CPU使用</span></span>
    <svg class="tray up" viewBox="0 0 14 14"><path d="M2 10l5-5 5 5" fill="none" stroke="#fff" stroke-width="1.300"/></svg>
    <svg class="tray" viewBox="0 0 18 16"><rect x="4" y="6" width="13" height="8" fill="none" stroke="#fff"/><rect x="5" y="7" width="6" height="6" fill="#fff"/><path d="M4 1h3v4H4z" fill="#fff"/></svg>
    <svg class="tray wf" viewBox="0 0 18 16"><path d="M2 14A12 12 0 0 1 14 2M5 14a9 9 0 0 1 9-9M8 14a6 6 0 0 1 6-6" fill="none" stroke="#ccc" stroke-dasharray="2 1"/><circle cx="13" cy="13" r="1.500" fill="#fff"/></svg>
    <svg class="tray vl" viewBox="0 0 18 16"><path d="M1 5h3l4-4v14l-4-4H1z" fill="none" stroke="#fff"/><path d="M11 5q2 3 0 6M14 3q3 5 0 10" fill="none" stroke="#fff"/></svg>
    <svg class="tray kb" viewBox="0 0 22 14"><rect x=".5" y=".5" width="21" height="13" fill="none" stroke="#fff"/><path d="M3 4h16M3 7h16M5 10.500h12" stroke="#fff" stroke-dasharray="2 1"/></svg>
    <span class="tl zh">中</span>
    <svg class="tray s" viewBox="0 0 16 16"><path d="M2 2l12-2 2 12-12 4-3-4z" fill="#e84a10"/><path d="M11 5H6v3h5v3H5" fill="none" stroke="#fff" stroke-width="2"/></svg>
    <span class="tl clock"><span>15:30</span><span>2018/5/6</span></span>
    <span class="notif"><svg class="nt" viewBox="0 0 18 18"><path d="M1 1h16v12H8l-3 4v-4H1z" fill="#fff"/><path d="M4 4h10M4 7h10M4 10h10" stroke="#333"/></svg><b class="nb">1</b></span>
  </div>
</div>

<div class="dialog">
  <div class="dtitle"><span>调整承台放坡</span><svg class="dx" viewBox="0 0 11 11"><path d="M.5.500l10 10M10.500.500l-10 10" stroke="#222"/></svg></div>
  <div class="drad">
    <span class="rd"><i class="rc"></i>放坡形式1</span>
    <span class="rd r2nd"><i class="rc on"></i>放坡形式2</span>
  </div>
  <svg class="dpane" viewBox="24 222 1392 816" width="464" height="272">
    <rect x="24" y="222" width="1392" height="816" fill="#000"/>
    <g fill="none" stroke="#fff" stroke-width="3">
      <path d="M290 295H1157M1157 235V483L1141 492L1172 483L1157 496V745"/>
      <path d="M290 265V330L272 335L306 335L290 342V405M250 295V505M245 295H272M245 380H590L680 475V685M535 475H680M590 685H1157"/>
      <path d="M491 380V685M450 475H497M450 685H497"/>
      <path d="M572 475Q575 420 605 398M617 685Q625 625 680 623"/>
      <path d="M817 982V661H991V982M765 982H883L907 940V1025L933 982H1050"/>
      <path d="M1183 295H1232M1226 295V685M1188 685H1232"/>
    </g>
    <path d="M290 301H1157M290 370H675" fill="none" stroke="#00ffff" stroke-width="3"/>
    <path d="M528 310L770 553M688 345V652H1157" fill="none" stroke="#f00" stroke-width="2.600"/>
    <g class="dt">
      <text x="440" y="343">筏板</text>
      <text x="943" y="523">承台</text>
      <text transform="translate(236 428) rotate(-90)">防水板厚</text>
      <text class="nm" transform="translate(476 427) rotate(-90)">300</text>
      <text class="nm" transform="translate(1211 495) rotate(-90)">1500</text>
      <text class="nm gr" transform="translate(476 587) rotate(-90)">600</text>
      <text class="nm gr sm2" transform="translate(558 428) rotate(-90)">45</text>
      <text class="nm gr sm2" transform="translate(610 632) rotate(-50)">90</text>
    </g>
  </svg>
  <div class="dfoot"><span class="dbtn">确定</span><span class="dbtn">取消</span></div>
</div>

<svg class="marks" viewBox="0 0 1366 768" width="1366" height="768">
  <ellipse cx="243.500" cy="195" rx="85" ry="24" fill="none" stroke="#f00" stroke-width="7"/>
  <ellipse cx="499" cy="236" rx="110" ry="33" fill="none" stroke="#f00" stroke-width="7"/>
</svg>

<div class="ime">
  <svg class="imes" viewBox="0 0 26 24"><path d="M3 4l19-4 4 17-18 7-6-3z" fill="#f05a1a"/><path d="M18 7H9v5h9v5H7" fill="none" stroke="#fff" stroke-width="3.200"/></svg>
  <div class="imebar">
    <b>中</b><b class="pn">°,</b>
    <svg viewBox="0 0 16 16"><circle cx="8" cy="8" r="7" fill="#fff" stroke="#1a7ac8" stroke-width="1.500"/><path d="M5 5v2M11 5v2M4.500 10q3.500 3 7 0" stroke="#1a7ac8" fill="none"/></svg>
    <svg viewBox="0 0 16 16"><rect x="5.500" y="1" width="5" height="9" rx="2.500" fill="#1a7ac8"/><path d="M3 7q0 5 5 5t5-5M8 12v3M5 15h6" stroke="#1a7ac8" fill="none"/></svg>
    <svg viewBox="0 0 16 16"><rect x="1" y="3" width="14" height="10" rx="1" fill="#1a7ac8"/><path d="M3 6h10M3 8h10M5 10.500h6" stroke="#fff" stroke-dasharray="1 1"/></svg>
    <svg viewBox="0 0 16 16"><circle cx="6" cy="4" r="3" fill="#b8c4cc"/><path d="M1 14q0-6 6-6h2v6z" fill="#b8c4cc"/><rect x="8" y="8" width="7" height="6" fill="#fff" stroke="#b8c4cc"/></svg>
    <svg viewBox="0 0 16 16"><path d="M5 1L1 4l2 3 1-1v9h8V6l1 1 2-3-4-3q-3 2-6 0z" fill="#1a7ac8"/></svg>
    <svg viewBox="0 0 16 16"><path d="M14 5a4 4 0 0 1-6 3l-5 7-2-2 6-5a4 4 0 0 1 4-6l-2 3 2 2z" fill="#1a7ac8"/></svg>
  </div>
</div>
<div class="score"><span>70</span></div>
</body>
</html>
```
FILE: styles.css
```css
*{box-sizing:border-box}
html,body{margin:0;padding:0}
body{position:relative;width:1366px;height:768px;overflow:hidden;background:#f0f0f0;color:#111;font:12px/16px "Noto Sans CJK SC","Liberation Sans",sans-serif;display:flex;flex-direction:column}
.sprite{position:absolute}
i,em,b{font-style:normal}
svg{display:block;flex:none}
.i{width:16px;height:16px}

.titlebar{height:23px;background:#fff;display:flex;align-items:center;flex:none;position:relative}
.appicon{width:14px;height:16px;margin-left:3px}
.titletext{margin-left:6px;color:#7f7f7f;font-size:12.700px;white-space:nowrap;flex:none}
.winctl{margin-left:auto;display:flex;gap:28px;padding-right:19px}
.winctl .wc{width:12px;height:12px}
.winctl .wc:nth-child(2){margin-right:6px}

.menubar{height:30px;display:flex;align-items:center;flex:none;padding-left:7px;background:#f5f5f5;white-space:nowrap}
.m{margin-right:10px}
.mn{margin-right:9px}.mw{margin-right:11px}.mx{margin-right:12px}.mz{margin-right:14px}
.t{display:inline-flex;align-items:center;gap:3px;margin-right:8px;white-space:nowrap;flex:none}
.off{color:#8c8c8c}
.more{font-size:14px;font-weight:700;line-height:12px;margin-top:-7px;color:#222}
.push{margin-left:auto;margin-right:3px}
.newsbox{width:187px;height:28px;margin-left:-1px;background:#f9f9f9;color:#0e6b68;line-height:28px;padding-left:29px;border-radius:2px}
.userbox{width:230px;height:28px;margin-left:4px;background:#f9f9f9;display:flex;align-items:center;padding-left:2px}
.userbox .t{gap:5px}
.bean{margin-left:6px;margin-right:7px}

.ar{display:inline-block;flex:none;width:0;height:0;border:3.500px solid transparent;border-top:4px solid #222;border-bottom:0;margin:0 8px 0 -3px}
.ar.off{border-top-color:#999}
.sep{display:block;flex:none;width:1px;height:20px;background:#bdbdbd;margin:0 6px 0 -1px}
.grip{display:block;flex:none;width:2px;height:18px;margin:0 5px 0 3px;background:repeating-linear-gradient(#888 0 2px,transparent 2px 4px)}
.grp{display:flex;align-items:center;height:26px;background:#fafafa;border-radius:3px;white-space:nowrap;flex:none}

.tb1{height:27px;margin-top:1px;display:flex;flex:none}
.g-a{width:151px;padding-left:4px;position:relative}
.g-a .op{margin-left:7px}
.g-a .ar1{margin-left:6px}
.g-a .s5{margin:0 7px 0 5px}
.g-a .ar2{margin-left:5px}
.g-a .more{margin-left:6px}
.g-b{width:549px;margin-left:1px;padding-left:4px}
.g-c{width:663px;margin-left:1px;padding-left:6px}
.sig{margin-left:2px}
.sigma{width:16px;font:700 14px "Liberation Serif",serif;text-align:center}
.sel2d{background:#fff}

.work{flex:1;display:flex;min-height:0}
.side{width:170px;padding:3px 5px 0 0;display:flex;flex-direction:column;flex:none}
.navh{height:15px;margin:0 0 1px 0;border:1px solid #a8a8a8;display:flex;align-items:center;line-height:13px;font-size:12.500px}
.pin{width:10px;height:12px;margin-left:auto;margin-right:8px}
.navx{width:9px;height:9px;margin-right:3px}
.sbtn{height:22px;border:1px solid #a8a8a8;background:#efefef;text-align:center;line-height:21px;flex:none}
.sbtn.s2{letter-spacing:.5px}
.sico{height:27px;background:#fff;display:flex;align-items:center;gap:5px;padding-left:7px;border-left:1px solid #ccc;border-right:1px solid #ccc}
.pm{width:18px;height:18px}
.treebox{height:489px;background:#fff;border:1px solid #888;margin:0 2px;display:flex;overflow:hidden;position:relative}
.tree{flex:1;padding-top:2px;position:relative;overflow:hidden}
.tree::before{content:"";position:absolute;left:12px;top:0;bottom:0;border-left:1px dotted #555}
.r{height:16px;display:flex;align-items:center;white-space:nowrap;position:relative}
.r em{font:10px "Liberation Mono",monospace}
.f{padding-left:7px}
.cr{width:9px;height:9px;position:relative;background:#fff;flex:none;z-index:1}
.cr::after{content:"";position:absolute;left:0;top:1px;width:6px;height:6px;border:solid #a0a0a0;border-width:2px 2px 0 0;transform:rotate(45deg)}
.cr.dn::after{left:1px;top:-1px;border-color:#555;transform:rotate(135deg)}
.fi{width:16px;height:16px;margin:0 4px 0 7px;position:relative}
.f::before{content:"";position:absolute;left:15px;width:8px;top:8px;border-top:1px dotted #555}
.l{padding-left:43px}
.l::before{content:"";position:absolute;left:31px;top:0;bottom:0;border-left:1px dotted #555}
.l.end::before{bottom:8px}
.l::after{content:"";position:absolute;left:32px;width:10px;top:8px;border-top:1px dotted #555}
.ti{width:15px;height:15px;margin-right:5px}
.cur{background:linear-gradient(90deg,#fff 40px,#d9d9d9 40px,#d9d9d9 121px,#fff 121px)}
.vs{width:16px;background:#f0f0f0;display:flex;flex-direction:column;align-items:center;margin:0 1px 0 0}
.vup,.vdn{width:14px;height:65px;flex:none;position:relative}
.vdn{height:78px}
.vup::after,.vdn::after{content:"";position:absolute;left:4px;width:6px;height:6px;border:solid #555;border-width:2px 0 0 2px;transform:rotate(45deg);top:8px}
.vdn::after{transform:rotate(225deg);top:auto;bottom:10px}
.vthumb{width:15px;height:346px;background:#c2c2c2;flex:none}

.right{flex:1;display:flex;flex-direction:column;min-width:0}
.tbr{display:flex;flex:none;margin-left:2px}
.r2{height:26px;margin-top:3px}
.r3{height:26px;margin-top:1px;gap:2px}
.r4{height:26px;margin-top:3px}
.rb{height:26px;margin-top:3px;gap:2px}
.canvas{flex:none;margin-top:2px}
.crisp{shape-rendering:crispEdges}
.g-d{width:789px}
.g-e{width:637px}
.g-f{width:422px}
.g-g{width:1066px}
.g-h{width:208px}
.g-i{width:260px;padding-left:10px}
.g-j{width:411px}
.cb{height:24px;background:#fff;display:flex;align-items:center;justify-content:space-between;margin-right:2px;flex:none;padding-left:2px}
.cb .ar{margin:0 6px 0 0}
.w57{width:57px}.w70{width:70px}
.s4{margin:0 5px 0 2px}
.ga{margin-left:1px;gap:5px}
.wide{gap:6px}.wide .i{width:11px;height:16px;margin-left:2px}
.tight{gap:3px;margin-right:4px}
.a2{margin:0 6px 0 0}
.a4{margin-right:4px}
.combo{width:56px;height:22px;border:1px solid #888;background:#f9f9f9;display:flex;align-items:center;justify-content:flex-end;margin:0 5px 0 0}
.combo .ar{margin:0 2px 0 0}
.sm{gap:5px;margin-left:3px}
.act{height:22px;background:#dbe9f7;border:1px solid #1a78c2;padding:0 3px;margin-left:-3px;margin-right:0}
.g-g .act{margin-left:-2px}
.g2{margin-left:6px}
.g-h .act{margin-right:3px}
.cross{gap:4px;margin-right:0}
.a3{gap:5px;width:51px;margin:0}
.a3+.t:not(.a3){margin-left:7px}
.offset{display:flex;align-items:center;width:60px;height:24px;background:#fff;margin-right:1px;overflow:hidden;padding-left:1px}
.offset .ar{margin:0 0 0 8px}
.gl{color:#808080;margin:0 3px 0 0}
.y{margin-left:4px}
.deg{margin-left:3px}
.spin{width:58px;height:22px;border:1px solid #808080;background:#f8f8f8;color:#777;display:flex;align-items:center;justify-content:flex-end;padding-right:20px;position:relative;margin-right:1px}
.s3{width:68px;margin-left:4px}
.sp{position:absolute;right:4px;top:4px;width:0;height:0;border:3px solid transparent;border-bottom:4px solid #777;border-top:0}
.sp::after{content:"";position:absolute;left:-3px;top:10px;width:0;height:0;border:3px solid transparent;border-top:4px solid #777;border-bottom:0}
.chkb{width:11px;height:11px;border:1px solid #888;background:#f4f4f4;margin:0 9px 0 0;flex:none}

.axn text{font:13px "Liberation Sans",sans-serif;fill:#c0c0d8;text-anchor:middle}
.axn .ax1{fill:#6a5aa0}
.lab{font:9px "Noto Sans CJK SC",sans-serif;fill:#7a70a0}
.lab2{font:10px "Noto Sans CJK SC",sans-serif;fill:#a08080}

.status{height:20px;margin-top:2px;display:flex;gap:3px;flex:none;font:12px/19px "Noto Sans CJK SC",sans-serif;background:#f0f0f0}
.c{background:#fafafa;border:1px solid #ddd;padding:0 1px;white-space:nowrap;overflow:hidden;flex:none}
.c1{width:147px;font:10px/18px "Liberation Mono",monospace}
.c2{width:77px;font:10px/18px "Liberation Mono","Noto Sans CJK SC",monospace;padding-left:2px}
.c3{width:97px;font:10px/18px "Liberation Mono","Noto Sans CJK SC",monospace;padding-left:2px}
.c4{width:47px;font:10px/18px "Liberation Mono",monospace;padding-left:2px}
.c5{width:914px;padding-left:2px}
.c6{flex:1;margin-left:-1px;font:10px/18px "Liberation Mono",monospace}

.taskbar{height:40px;flex:none;background:#05090c;display:flex;color:#ddd}
.start{width:48px;background:#000;display:flex;align-items:center;justify-content:center}
.win{width:16px;height:16px}
.search{width:344px;background:#333;display:flex;align-items:center;padding-left:10px;color:#a0a0a0;font-size:14px}
.cortana{width:20px;height:20px;border-radius:50%;border:3px solid #ddd;flex:none;margin-right:6px}
.mic{width:12px;height:18px;margin-left:auto;margin-right:15px}
.tasks{flex:1;display:flex;align-items:center;height:40px}
.ts{height:40px;display:flex;align-items:center;justify-content:center;flex:none;position:relative}
.w48{width:48px}.w52{width:52px}.w50{width:50px}.w46{width:46px}.w44{width:44px}.w43{width:43px}.w42{width:42px}
.tv{width:20px;height:16px}
.ti2{width:22px;height:22px}
.ti2.big{width:24px;height:24px}
.cur-app{background:#2f3438}
.run::after{content:"";position:absolute;left:4px;right:4px;bottom:0;height:2px;background:#76b9ed}
.cur-app.run::after{left:0;right:0}
.tsep{width:2px;height:20px;background:#444;margin:0 5px 0 14px;flex:none}
.tsep.s2{margin:0 21px 0 17px}
.tl{color:#ddd;flex:none}
.link{margin-right:6px}
.cpu{display:flex;flex-direction:column;align-items:center;width:50px;line-height:18px;margin-right:17px}
.tray{width:18px;height:16px;margin-right:7px}
.tray.up{width:14px;height:14px;margin-right:9px}
.tray.wf{margin-right:4px}
.tray.vl{margin-right:9px}
.tray.kb{width:22px;height:14px;margin-right:9px}
.zh{font-size:13px;margin-right:14px}
.tray.s{margin-right:15px}
.clock{display:flex;flex-direction:column;align-items:center;width:60px;line-height:18px;font-size:13px}
.notif{position:relative;margin-left:19px;width:26px;height:30px;flex:none}
.nt{width:16px;height:16px;margin-top:7px}
.nb{position:absolute;left:7px;top:14px;width:18px;height:18px;border-radius:50%;background:#333;border:1px solid #888;color:#fff;font:700 11px/16px "Liberation Sans",sans-serif;text-align:center}

.dialog{position:absolute;left:215px;top:190px;width:470px;height:384px;background:#f0f0f0;border:1px solid #4a90d9;border-width:1px 2px 2px 1px;display:flex;flex-direction:column}
.dtitle{height:26px;background:#fff;display:flex;align-items:center;justify-content:space-between;padding:0 10px 0 3px;flex:none;border-bottom:1px solid #ddd}
.dx{width:11px;height:11px}
.drad{height:41px;display:flex;align-items:center;padding:5px 0 0 8px;border-bottom:1px solid #ddd;flex:none;margin-bottom:1px}
.rd{display:flex;align-items:center;gap:3px;flex:none}
.r2nd{margin-left:158px}
.rc{width:13px;height:13px;border:1px solid #555;border-radius:50%;background:#fff;position:relative;flex:none}
.rc.on::after{content:"";position:absolute;left:2.500px;top:2.500px;width:6px;height:6px;border-radius:50%;background:#333}
.dpane{margin-left:2px}
.dt text{font:36px "Noto Sans CJK SC",sans-serif;fill:#fff;text-anchor:middle}
.dt .nm{font:30px "Liberation Sans",sans-serif}
.dt .gr{fill:#00e000}
.dt .sm2{font-size:24px}
.dfoot{flex:1;display:flex;justify-content:flex-end;gap:24px;padding:12px 12px 0 0}
.dbtn{width:72px;height:23px;background:#e1e1e1;border:1px solid #adadad;text-align:center;line-height:21px}

.marks{position:absolute;left:0;top:0;pointer-events:none}

.ime{position:absolute;left:703px;top:3px;display:flex;align-items:center}
.imes{width:26px;height:24px;position:relative;z-index:1}
.imebar{width:181px;height:24px;margin-left:-2px;background:#fff;border:1px solid #b6cfe6;display:flex;align-items:center;padding-left:8px;gap:6px;color:#1a7ac8}
.imebar b{font-size:14px}
.imebar .pn{width:14px;margin:0 2px;font-size:12px}
.imebar svg{width:16px;height:16px}
.score{position:absolute;left:967px;top:-29px;width:48px;height:48px;border-radius:50%;background:#3fb950;border:2px solid #c9c9c9;color:#fff;font:700 12px/14px "Liberation Sans",sans-serif;text-align:center}
.score span{position:absolute;left:0;right:0;top:29px}
```
